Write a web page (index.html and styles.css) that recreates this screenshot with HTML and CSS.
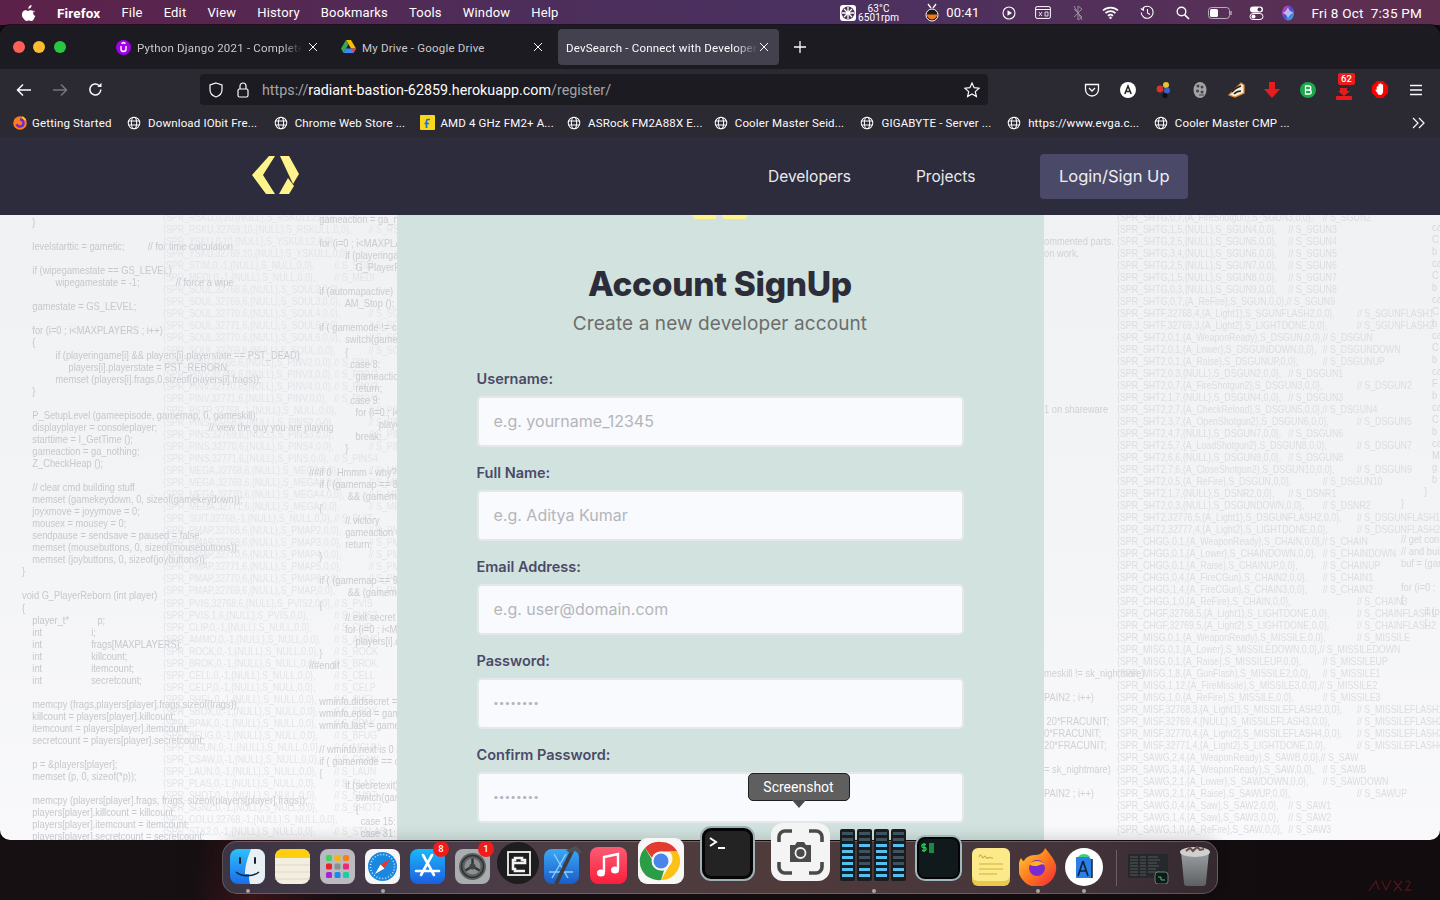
FILE: index.html
```html
<!DOCTYPE html>
<html lang="en">
<head>
    <meta charset="UTF-8">
    <meta name="viewport" content="width=device-width, initial-scale=1.0">
    <title>DevSearch - Connect with Developers</title>
    <link rel="stylesheet" href="styles.css">
</head>
<body>
    <svg class="sprites" aria-hidden="true">
        <symbol id="globe" viewBox="0 0 16 16">
            <g fill="none" stroke="#fbfbfe" stroke-width="1.2">
                <circle cx="8" cy="8" r="6.6"/>
                <ellipse cx="8" cy="8" rx="3" ry="6.6"/>
                <path d="M1.6 5.8h12.8M1.6 10.2h12.8"/>
            </g>
        </symbol>
        <symbol id="close" viewBox="0 0 10 10">
            <path d="M1 1l8 8M9 1l-8 8" stroke="#fbfbfe" stroke-width="1" fill="none"/>
        </symbol>
    </svg>

    <header class="menubar">
        <div class="menu-left">
            <svg class="apple" width="14" height="16" viewBox="0 0 14 16"><path fill="#fff" d="M9.6 0c.1 1.1-.3 2-.9 2.700-.6.7-1.500 1.200-2.400 1.100-.1-1 .4-2 .9-2.600C7.800.5 8.800.1 9.600 0zM12.800 5.400c-1 .6-1.600 1.500-1.600 2.700 0 1.400.8 2.400 2.100 3-.4 1.100-.9 2.100-1.600 3.100-.6.900-1.300 1.800-2.300 1.800s-1.300-.6-2.500-.6-1.600.6-2.500.6c-1 0-1.700-1-2.400-1.900C.4 12.600-.3 10.700 0 8.800c.2-1.900 1.700-3.500 3.400-3.500 1 0 1.900.7 2.600.7.700 0 1.700-.8 2.900-.7 1.600.1 3 .5 3.900 1.700z"/></svg>
            <strong class="menu-app">Firefox</strong>
            <span>File</span><span>Edit</span><span>View</span><span>History</span><span>Bookmarks</span><span>Tools</span><span>Window</span><span>Help</span>
        </div>
        <div class="menu-right">
            <div class="status-fan">
                <svg width="18" height="18" viewBox="0 0 18 18"><rect x="1" y="1" width="16" height="16" rx="3" fill="#fff"/><circle cx="9" cy="9" r="6.500" fill="#4b2f55"/><path d="M9 3v12M3 9h12M5 5l8 8M13 5l-8 8" stroke="#fff" stroke-width="1.300"/></svg>
                <div class="fan-text"><span>63°C</span><span>6501rpm</span></div>
            </div>
            <div class="status-timer">
                <svg width="14" height="20" viewBox="0 0 14 20"><path d="M3 1l3 4M11 1L8 5" stroke="#fff" stroke-width="1.300"/><circle cx="7" cy="12" r="6" fill="#1b1b1b" stroke="#fff"/><path d="M2 11.500h10a5 5 0 0 1-10 0z" fill="#f07a1a"/></svg>
                <span>00:41</span>
            </div>
            <svg class="st st-play" width="14" height="14" viewBox="0 0 14 14"><circle cx="7" cy="7" r="6" fill="none" stroke="#fff" stroke-width="1.100"/><path d="M5.500 4.300L10 7l-4.500 2.700z" fill="#fff"/></svg>
            <svg class="st st-box" width="16" height="13" viewBox="0 0 16 13"><rect x=".6" y=".6" width="14.800" height="11.800" rx="1.500" fill="none" stroke="#fff"/><path d="M1 3.500h14" stroke="#fff"/><path d="M4 6l3 4M7 6l-3 4M10 6h3v4h-3z" stroke="#fff" fill="none" stroke-width=".8"/></svg>
            <svg class="st st-bt" width="10" height="16" viewBox="0 0 10 16"><path d="M1 4l8 8-4 3V1l4 3-8 8" fill="none" stroke="#9a8aa0" stroke-width="1"/><path d="M1 1l8 14" stroke="#9a8aa0"/></svg>
            <svg class="st st-wifi" width="17" height="13" viewBox="0 0 17 13"><path d="M1 4.500a11 11 0 0 1 15 0M3.500 7.200a7.300 7.300 0 0 1 10 0M6 9.800a3.600 3.600 0 0 1 5 0" fill="none" stroke="#fff" stroke-width="1.700"/><circle cx="8.500" cy="11.700" r="1.200" fill="#fff"/></svg>
            <svg class="st st-hist" width="15" height="15" viewBox="0 0 15 15"><path d="M2.500 3.500a6 6 0 1 1-1.300 4" fill="none" stroke="#fff" stroke-width="1.100"/><path d="M0.800 3.500l2.500 1.800.4-3M7.500 4v4l2.500 1.500" fill="none" stroke="#fff" stroke-width="1.100"/></svg>
            <svg class="st st-search" width="14" height="14" viewBox="0 0 14 14"><circle cx="5.500" cy="5.500" r="4.300" fill="none" stroke="#fff" stroke-width="1.400"/><path d="M8.800 8.800L13 13" stroke="#fff" stroke-width="1.700"/></svg>
            <svg class="st st-batt" width="25" height="12" viewBox="0 0 25 12"><rect x=".5" y=".5" width="21" height="11" rx="3" fill="none" stroke="#b9abc0"/><rect x="2" y="2" width="8" height="8" rx="1.500" fill="#fff"/><path d="M23 4v4" stroke="#b9abc0" stroke-width="1.400"/></svg>
            <svg class="st st-ctl" width="15" height="14" viewBox="0 0 15 14"><rect x="1" y=".5" width="13" height="6" rx="3" fill="#fff"/><circle cx="10.500" cy="3.500" r="2" fill="#4f2f55"/><rect x="1" y="7.500" width="13" height="6" rx="3" fill="none" stroke="#fff"/><circle cx="4.500" cy="10.500" r="2" fill="#fff"/></svg>
            <svg class="st st-siri" width="14" height="16" viewBox="0 0 14 16"><defs><linearGradient id="siri" x1="0" y1="0" x2="1" y2="1"><stop offset="0" stop-color="#f040a8"/><stop offset=".5" stop-color="#4a48d8"/><stop offset="1" stop-color="#30d8e0"/></linearGradient></defs><ellipse cx="7" cy="8" rx="6" ry="7.500" fill="url(#siri)"/><path d="M1.500 8c3-1 4-3.500 5.500-5.500C8 5 9.500 7 12.500 8c-3 1-4.500 2.500-5.500 5.500C6 10.500 4.500 9 1.500 8z" fill="#fff" opacity=".6"/></svg>
            <span class="clock">Fri 8 Oct&nbsp; 7:35 PM</span>
        </div>
    </header>

    <div class="window">
        <div class="tabbar">
            <div class="lights"><i class="light red"></i><i class="light amber"></i><i class="light green"></i></div>
            <div class="tab tab-udemy">
                <svg width="15" height="15" viewBox="0 0 15 15"><circle cx="7.500" cy="7.500" r="7.500" fill="#a300ea"/><path d="M5 6v3a2.500 2.500 0 0 0 5 0V6M5.500 3.500L7.500 2.500l2 1" fill="none" stroke="#fff" stroke-width="1.400"/></svg>
                <span class="tab-title fade">Python Django 2021 - Complete</span>
                <svg class="tab-x" width="10" height="10"><use href="#close"/></svg>
            </div>
            <div class="tab tab-drive">
                <svg width="15" height="14" viewBox="0 0 15 14"><path d="M5 0h5l5 8.500h-5z" fill="#fbbc04"/><path d="M5 0L0 8.500 2.500 13 7.500 4.300z" fill="#34a853"/><path d="M2.500 13h10l2.500-4.500H5z" fill="#4285f4"/><path d="M10 8.500h5L12.500 13z" fill="#ea4335"/></svg>
                <span class="tab-title">My Drive - Google Drive</span>
                <svg class="tab-x" width="10" height="10"><use href="#close"/></svg>
            </div>
            <div class="tab tab-active">
                <span class="tab-title fade">DevSearch - Connect with Developers</span>
                <svg class="tab-x" width="10" height="10"><use href="#close"/></svg>
            </div>
            <svg class="tab-new" width="12" height="12" viewBox="0 0 12 12"><path d="M6 0v12M0 6h12" stroke="#fbfbfe" stroke-width="1.300"/></svg>
        </div>

        <div class="toolbar">
            <div class="nav-buttons">
                <svg width="16" height="14" viewBox="0 0 16 14"><path d="M15 7H1.500M7 1.500L1.500 7 7 12.500" fill="none" stroke="#fbfbfe" stroke-width="1.500"/></svg>
                <svg width="16" height="14" viewBox="0 0 16 14"><path d="M1 7h13.500M9 1.500L14.500 7 9 12.500" fill="none" stroke="#77767e" stroke-width="1.500"/></svg>
                <svg width="15" height="15" viewBox="0 0 15 15"><path d="M12.800 7.500a5.500 5.500 0 1 1-1.700-4" fill="none" stroke="#fbfbfe" stroke-width="1.500"/><path d="M13.500 0.800v4.200H9.300z" fill="#fbfbfe"/></svg>
            </div>
            <div class="urlbar">
                <svg width="14" height="16" viewBox="0 0 14 16"><path d="M7 1l6 2v5c0 3.500-2.500 5.800-6 7-3.500-1.200-6-3.500-6-7V3z" fill="none" stroke="#fbfbfe" stroke-width="1.200"/></svg>
                <svg width="12" height="16" viewBox="0 0 12 16"><rect x="1" y="7" width="10" height="8" rx="1.500" fill="none" stroke="#fbfbfe" stroke-width="1.200"/><path d="M3 7V4a3 3 0 0 1 6 0v3" fill="none" stroke="#fbfbfe" stroke-width="1.200"/></svg>
                <div class="url"><span class="dim">https://</span>radiant-bastion-62859.herokuapp.com<span class="dim">/register/</span></div>
                <svg class="star" width="16" height="16" viewBox="0 0 16 16"><path d="M8 1l2.100 4.700 5 .5-3.800 3.400 1.100 5L8 12l-4.400 2.600 1.100-5L.9 6.200l5-.5z" fill="none" stroke="#fbfbfe" stroke-width="1.200"/></svg>
            </div>
            <div class="addons">
                <span class="addon"><svg width="16" height="16" viewBox="0 0 16 16"><path d="M1.500 2.500h13v5a6.500 6.500 0 0 1-13 0z" fill="none" stroke="#fbfbfe" stroke-width="1.300"/><path d="M5 6l3 3 3-3" fill="none" stroke="#fbfbfe" stroke-width="1.300"/></svg></span>
                <span class="addon"><svg width="16" height="16" viewBox="0 0 16 16"><circle cx="8" cy="8" r="8" fill="#fff"/><path d="M4.800 12L8 4l3.200 8M6 9.500h4" fill="none" stroke="#222" stroke-width="1.500"/></svg></span>
                <span class="addon"><svg width="16" height="18" viewBox="0 0 16 18"><circle cx="10" cy="4" r="3" fill="#e8c23a"/><circle cx="4" cy="8" r="3.400" fill="#d8352a"/><circle cx="11" cy="9.500" r="3" fill="#3a62c8"/><circle cx="9" cy="14.500" r="2.600" fill="#111"/></svg></span>
                <span class="addon"><svg width="16" height="18" viewBox="0 0 16 18"><ellipse cx="8" cy="9" rx="6.500" ry="8" fill="#a4a4a4"/><circle cx="6" cy="5" r="1.500" fill="#444"/><circle cx="10" cy="6" r="1.500" fill="#444"/><circle cx="5.500" cy="10" r="1.500" fill="#444"/><circle cx="10" cy="11" r="1.500" fill="#444"/><path d="M7 14h5" stroke="#444" stroke-width="1.200"/></svg></span>
                <span class="addon"><svg width="17" height="16" viewBox="0 0 17 16"><path d="M1 13L13 1l3 2v8l-9 4z" fill="#f6eeda" stroke="#e08a30" stroke-width="1.300"/><path d="M4 10c2-3 6-5 9-6M6 12c2-2 4-3 7-3" stroke="#222" stroke-width="1.500" fill="none"/></svg></span>
                <span class="addon"><svg width="16" height="16" viewBox="0 0 16 16"><path d="M5 0h6v7h5l-8 9-8-9h5z" fill="#e81c1c"/></svg></span>
                <span class="addon"><svg width="16" height="16" viewBox="0 0 16 16"><circle cx="8" cy="8" r="8" fill="#1aa84a"/><path d="M5.500 4h3.300a2 2 0 0 1 0 4H5.500h3.700a2 2 0 0 1 0 4H5.500z" fill="none" stroke="#fff" stroke-width="1.300"/></svg></span>
                <span class="addon addon-badge"><svg width="16" height="12" viewBox="0 0 16 12"><path d="M4 0h7v3h3L8 8 2 3h2z" fill="#e81c1c"/><rect y="8" width="16" height="4" rx="1" fill="#e81c1c"/></svg><b class="badge">62</b></span>
                <span class="addon"><svg width="16" height="17" viewBox="0 0 16 17"><path d="M5 0h6l5 5v7l-5 5H5l-5-5V5z" fill="#f00"/><path d="M4.700 9V6a.8.8 0 0 1 1.600 0V3.500a.8.8 0 0 1 1.600 0V3a.8.8 0 0 1 1.600 0v1a.8.8 0 0 1 1.600 0v6c0 2-1 4-3 4-1.500 0-2.200-.8-2.800-2L3.600 9.500c-.4-.8.600-1.300 1.100-.5z" fill="#fff"/></svg></span>
                <span class="addon"><svg width="14" height="12" viewBox="0 0 14 12"><path d="M1 1.500h12M1 6h12M1 10.500h12" stroke="#fbfbfe" stroke-width="1.400"/></svg></span>
            </div>
        </div>

        <div class="bookmarks">
            <div class="bm bm-first">
                <svg width="14" height="14" viewBox="0 0 14 14"><circle cx="7" cy="7" r="6.800" fill="#ff7a1a"/><path d="M7 3.500a3.500 3.500 0 1 1-3.300 4.700" fill="none" stroke="#6b2bd0" stroke-width="2.400"/><path d="M9 0c2.500 1 4 3 4.500 5L10 3z" fill="#ffd23a"/></svg>
                <span>Getting Started</span>
            </div>
            <div class="bm"><svg width="14" height="14"><use href="#globe"/></svg><span>Download IObit Fre...</span></div>
            <div class="bm"><svg width="14" height="14"><use href="#globe"/></svg><span>Chrome Web Store ...</span></div>
            <div class="bm bm-tight">
                <svg width="15" height="15" viewBox="0 0 15 15"><rect width="15" height="15" rx="1" fill="#f8d71c"/><path d="M10 4.500H8a1.500 1.500 0 0 0-1.500 1.500v7M4.500 8.500h4.500" fill="none" stroke="#1d6fd8" stroke-width="1.700"/></svg>
                <span>AMD 4 GHz FM2+ A...</span>
            </div>
            <div class="bm"><svg width="14" height="14"><use href="#globe"/></svg><span>ASRock FM2A88X E...</span></div>
            <div class="bm"><svg width="14" height="14"><use href="#globe"/></svg><span>Cooler Master Seid...</span></div>
            <div class="bm"><svg width="14" height="14"><use href="#globe"/></svg><span>GIGABYTE - Server ...</span></div>
            <div class="bm"><svg width="14" height="14"><use href="#globe"/></svg><span>https://www.evga.c...</span></div>
            <div class="bm"><svg width="14" height="14"><use href="#globe"/></svg><span>Cooler Master CMP ...</span></div>
            <svg class="bm-more" width="14" height="12" viewBox="0 0 14 12"><path d="M1 1l5 5-5 5M7 1l5 5-5 5" fill="none" stroke="#fbfbfe" stroke-width="1.200"/></svg>
        </div>

        <div class="page">
            <!-- wallpaper of the site: doom source listing -->
            <div class="code-bg">
<pre class="code code-a">    }

    levelstarttic = gametic;         // for time calculation

    if (wipegamestate == GS_LEVEL)
             wipegamestate = -1;              // force a wipe

    gamestate = GS_LEVEL;

    for (i=0 ; i&lt;MAXPLAYERS ; i++)
    {
             if (playeringame[i] &amp;&amp; players[i].playerstate == PST_DEAD)
                  players[i].playerstate = PST_REBORN;
             memset (players[i].frags,0,sizeof(players[i].frags));
    }

    P_SetupLevel (gameepisode, gamemap, 0, gameskill);
    displayplayer = consoleplayer;                    // view the guy you are playing
    starttime = I_GetTime ();
    gameaction = ga_nothing;
    Z_CheckHeap ();

    // clear cmd building stuff
    memset (gamekeydown, 0, sizeof(gamekeydown));
    joyxmove = joyymove = 0;
    mousex = mousey = 0;
    sendpause = sendsave = paused = false;
    memset (mousebuttons, 0, sizeof(mousebuttons));
    memset (joybuttons, 0, sizeof(joybuttons));
}

void G_PlayerReborn (int player)
{
    player_t*           p;
    int                   i;
    int                   frags[MAXPLAYERS];
    int                   killcount;
    int                   itemcount;
    int                   secretcount;

    memcpy (frags,players[player].frags,sizeof(frags));
    killcount = players[player].killcount;
    itemcount = players[player].itemcount;
    secretcount = players[player].secretcount;

    p = &amp;players[player];
    memset (p, 0, sizeof(*p));

    memcpy (players[player].frags, frags, sizeof(players[player].frags));
    players[player].killcount = killcount;
    players[player].itemcount = itemcount;
    players[player].secretcount = secretcount;</pre>
<pre class="code code-b">{SPR_RSKU,0,10,{NULL},S_RSKULL2,0,0},
{SPR_RSKU,32769,10,{NULL},S_RSKULL,0,0},	// S_RSKULL2
{SPR_YSKU,0,10,{NULL},S_YSKULL2,0,0},
{SPR_YSKU,32769,10,{NULL},S_YSKULL,0,0},
{SPR_STIM,0,-1,{NULL},S_NULL,0,0},	// S_STIM
{SPR_MEDI,0,-1,{NULL},S_NULL,0,0},	// S_MEDI
{SPR_SOUL,32768,6,{NULL},S_SOUL2,0,0},
{SPR_SOUL,32769,6,{NULL},S_SOUL3,0,0},
{SPR_SOUL,32770,6,{NULL},S_SOUL4,0,0},	// S_SOUL3
{SPR_SOUL,32771,6,{NULL},S_SOUL5,0,0},	// S_SOUL4
{SPR_SOUL,32770,6,{NULL},S_SOUL6,0,0},	// S_SOUL5
{SPR_SOUL,32769,6,{NULL},S_SOUL,0,0},	// S_SOUL6
{SPR_PINV,32768,6,{NULL},S_PINV2,0,0},	// S_PINV
{SPR_PINV,32769,6,{NULL},S_PINV3,0,0},	// S_PINV2
{SPR_PINV,32770,6,{NULL},S_PINV4,0,0},	// S_PINV3
{SPR_PINV,32771,6,{NULL},S_PINV,0,0},	// S_PINV4
{SPR_PSTR,32768,-1,{NULL},S_NULL,0,0},	// S_PSTR
{SPR_PINS,32768,6,{NULL},S_PINS2,0,0},	// S_PINS
{SPR_PINS,32769,6,{NULL},S_PINS3,0,0},	// S_PINS2
{SPR_PINS,32770,6,{NULL},S_PINS4,0,0},	// S_PINS3
{SPR_PINS,32771,6,{NULL},S_PINS,0,0},	// S_PINS4
{SPR_MEGA,32768,6,{NULL},S_MEG2,0,0},	// S_MEGA
{SPR_MEGA,32769,6,{NULL},S_MEGA3,0,0},	// S_MEGA2
{SPR_MEGA,32770,6,{NULL},S_MEGA4,0,0},	// S_MEGA3
{SPR_MEGA,32771,6,{NULL},S_MEGA,0,0},	// S_MEGA4
{SPR_SUIT,32768,-1,{NULL},S_NULL,0,0},	// S_SUIT
{SPR_PMAP,32768,6,{NULL},S_PMAP2,0,0},	// S_PMAP
{SPR_PMAP,32769,6,{NULL},S_PMAP3,0,0},	// S_PMAP2
{SPR_PMAP,32770,6,{NULL},S_PMAP4,0,0},	// S_PMAP3
{SPR_PMAP,32771,6,{NULL},S_PMAP5,0,0},	// S_PMAP4
{SPR_PMAP,32770,6,{NULL},S_PMAP6,0,0},	// S_PMAP5
{SPR_PMAP,32769,6,{NULL},S_PMAP,0,0},	// S_PMAP6
{SPR_PVIS,32768,6,{NULL},S_PVIS2,0,0},	// S_PVIS
{SPR_PVIS,1,6,{NULL},S_PVIS,0,0},	// S_PVIS2
{SPR_CLIP,0,-1,{NULL},S_NULL,0,0},	// S_CLIP
{SPR_AMMO,0,-1,{NULL},S_NULL,0,0},	// S_AMMO
{SPR_ROCK,0,-1,{NULL},S_NULL,0,0},	// S_ROCK
{SPR_BROK,0,-1,{NULL},S_NULL,0,0},	// S_BROK
{SPR_CELL,0,-1,{NULL},S_NULL,0,0},	// S_CELL
{SPR_CELP,0,-1,{NULL},S_NULL,0,0},	// S_CELP
{SPR_SHEL,0,-1,{NULL},S_NULL,0,0},	// S_SHEL
{SPR_SBOX,0,-1,{NULL},S_NULL,0,0},	// S_SBOX
{SPR_BPAK,0,-1,{NULL},S_NULL,0,0},	// S_BPAK
{SPR_BFUG,0,-1,{NULL},S_NULL,0,0},	// S_BFUG
{SPR_MGUN,0,-1,{NULL},S_NULL,0,0},	// S_MGUN
{SPR_CSAW,0,-1,{NULL},S_NULL,0,0},	// S_CSAW
{SPR_LAUN,0,-1,{NULL},S_NULL,0,0},	// S_LAUN
{SPR_PLAS,0,-1,{NULL},S_NULL,0,0},	// S_PLAS
{SPR_SHOT,0,-1,{NULL},S_NULL,0,0},	// S_SHOT
{SPR_SGN2,0,-1,{NULL},S_NULL,0,0},	// S_SHOT2
{SPR_COLU,32768,-1,{NULL},S_NULL,0,0},
{SPR_STK2,0,-1,{NULL},S_NULL,0,0},	// S_STALAG</pre>
<pre class="code code-c">    gameaction = ga_nothing;

    for (i=0 ; i&lt;MAXPLAYERS ; i++)
              if (playeringame[i])
                  G_PlayerFinishLevel (i);

    if (automapactive)
              AM_Stop ();

    if ( gamemode != commercial)
              switch(gamemap)
              {
                case 8:
                  gameaction = ga_victory;
                  return;
                case 9:
                  for (i=0 ; i&lt;MAXPLAYERS ; i++)
                           players[i].didsecret = true;
                  break;
              }

//#if 0  Hmmm - why?
    if ( (gamemap == 8)
               &amp;&amp; (gamemode != commercial) )
    {
              // victory
              gameaction = ga_victory;
              return;
    }

    if ( (gamemap == 9)
               &amp;&amp; (gamemode != commercial) )
    {
              // exit secret level
              for (i=0 ; i&lt;MAXPLAYERS ; i++)
                  players[i].didsecret = true;
    }
//#endif


    wminfo.didsecret = players[consoleplayer].didsecret;
    wminfo.epsd = gameepisode -1;
    wminfo.last = gamemap -1;

    // wminfo.next is 0 biased
    if ( gamemode == commercial)
    {
              if (secretexit)
                  switch(gamemap)
                  {
                    case 15: wminfo.next = 30; break;
                    case 31: wminfo.next = 31; break;</pre>
<pre class="code code-e">ommented parts.
on work.












1 on shareware





















meskill != sk_nightmare)

PAIN2 ; i++)

 20*FRACUNIT;
0*FRACUNIT;
20*FRACUNIT;

= sk_nightmare)

PAIN2 ; i++)</pre>
<pre class="code code-d">{SPR_SHTG,0,7,{A_FireShotgun},S_SGUN3,0,0},	// S_SGUN2
{SPR_SHTG,1,5,{NULL},S_SGUN4,0,0},	// S_SGUN3
{SPR_SHTG,2,5,{NULL},S_SGUN5,0,0},	// S_SGUN4
{SPR_SHTG,3,4,{NULL},S_SGUN6,0,0},	// S_SGUN5
{SPR_SHTG,2,5,{NULL},S_SGUN7,0,0},	// S_SGUN6
{SPR_SHTG,1,5,{NULL},S_SGUN8,0,0},	// S_SGUN7
{SPR_SHTG,0,3,{NULL},S_SGUN9,0,0},	// S_SGUN8
{SPR_SHTG,0,7,{A_ReFire},S_SGUN,0,0},// S_SGUN9
{SPR_SHTF,32768,4,{A_Light1},S_SGUNFLASH2,0,0},	// S_SGUNFLASH1
{SPR_SHTF,32769,3,{A_Light2},S_LIGHTDONE,0,0},	// S_SGUNFLASH2
{SPR_SHT2,0,1,{A_WeaponReady},S_DSGUN,0,0},// S_DSGUN
{SPR_SHT2,0,1,{A_Lower},S_DSGUNDOWN,0,0},	// S_DSGUNDOWN
{SPR_SHT2,0,1,{A_Raise},S_DSGUNUP,0,0},	// S_DSGUNUP
{SPR_SHT2,0,3,{NULL},S_DSGUN2,0,0},	// S_DSGUN1
{SPR_SHT2,0,7,{A_FireShotgun2},S_DSGUN3,0,0},	// S_DSGUN2
{SPR_SHT2,1,7,{NULL},S_DSGUN4,0,0},	// S_DSGUN3
{SPR_SHT2,2,7,{A_CheckReload},S_DSGUN5,0,0},// S_DSGUN4
{SPR_SHT2,3,7,{A_OpenShotgun2},S_DSGUN6,0,0},	// S_DSGUN5
{SPR_SHT2,4,7,{NULL},S_DSGUN7,0,0},	// S_DSGUN6
{SPR_SHT2,5,7,{A_LoadShotgun2},S_DSGUN8,0,0},	// S_DSGUN7
{SPR_SHT2,6,6,{NULL},S_DSGUN9,0,0},	// S_DSGUN8
{SPR_SHT2,7,6,{A_CloseShotgun2},S_DSGUN10,0,0},	// S_DSGUN9
{SPR_SHT2,0,5,{A_ReFire},S_DSGUN,0,0},	// S_DSGUN10
{SPR_SHT2,1,7,{NULL},S_DSNR2,0,0},	// S_DSNR1
{SPR_SHT2,0,3,{NULL},S_DSGUNDOWN,0,0},	// S_DSNR2
{SPR_SHT2,32776,5,{A_Light1},S_DSGUNFLASH2,0,0},	// S_DSGUNFLASH1
{SPR_SHT2,32777,4,{A_Light2},S_LIGHTDONE,0,0},	// S_DSGUNFLASH2
{SPR_CHGG,0,1,{A_WeaponReady},S_CHAIN,0,0},// S_CHAIN
{SPR_CHGG,0,1,{A_Lower},S_CHAINDOWN,0,0},	// S_CHAINDOWN
{SPR_CHGG,0,1,{A_Raise},S_CHAINUP,0,0},	// S_CHAINUP
{SPR_CHGG,0,4,{A_FireCGun},S_CHAIN2,0,0},	// S_CHAIN1
{SPR_CHGG,1,4,{A_FireCGun},S_CHAIN3,0,0},	// S_CHAIN2
{SPR_CHGG,1,0,{A_ReFire},S_CHAIN,0,0},		// S_CHAIN3
{SPR_CHGF,32768,5,{A_Light1},S_LIGHTDONE,0,0},	// S_CHAINFLASH1
{SPR_CHGF,32769,5,{A_Light2},S_LIGHTDONE,0,0},	// S_CHAINFLASH2
{SPR_MISG,0,1,{A_WeaponReady},S_MISSILE,0,0},	// S_MISSILE
{SPR_MISG,0,1,{A_Lower},S_MISSILEDOWN,0,0},// S_MISSILEDOWN
{SPR_MISG,0,1,{A_Raise},S_MISSILEUP,0,0},	// S_MISSILEUP
{SPR_MISG,1,8,{A_GunFlash},S_MISSILE2,0,0},	// S_MISSILE1
{SPR_MISG,1,12,{A_FireMissile},S_MISSILE3,0,0},// S_MISSILE2
{SPR_MISG,1,0,{A_ReFire},S_MISSILE,0,0},	// S_MISSILE3
{SPR_MISF,32768,3,{A_Light1},S_MISSILEFLASH2,0,0},	// S_MISSILEFLASH1
{SPR_MISF,32769,4,{NULL},S_MISSILEFLASH3,0,0},	// S_MISSILEFLASH2
{SPR_MISF,32770,4,{A_Light2},S_MISSILEFLASH4,0,0},	// S_MISSILEFLASH3
{SPR_MISF,32771,4,{A_Light2},S_LIGHTDONE,0,0},	// S_MISSILEFLASH4
{SPR_SAWG,2,4,{A_WeaponReady},S_SAWB,0,0},// S_SAW
{SPR_SAWG,3,4,{A_WeaponReady},S_SAW,0,0},	// S_SAWB
{SPR_SAWG,2,1,{A_Lower},S_SAWDOWN,0,0},	// S_SAWDOWN
{SPR_SAWG,2,1,{A_Raise},S_SAWUP,0,0},		// S_SAWUP
{SPR_SAWG,0,4,{A_Saw},S_SAW2,0,0},	// S_SAW1
{SPR_SAWG,1,4,{A_Saw},S_SAW3,0,0},	// S_SAW2
{SPR_SAWG,1,0,{A_ReFire},S_SAW,0,0},	// S_SAW3</pre>
<pre class="code code-f">            ca
            C
            b
            ca
            C
            b
            ca
            C
            b
            ca
            C
            b
            ca
            F
            b
            ca
            C
            b
            ca
            M
            g
            b
         }
}


// get con
// and buil
buf = (gam

for (i=0 ;
{
         if (p
         {</pre>
            </div>

            <nav class="site-nav">
                <svg class="site-logo" width="47" height="38" viewBox="0 0 47 38"><g fill="#fff38c"><path d="M17 0h6L11 19l12 19h-9L0 19z"/><path d="M28 0h9l10 18-6 10z"/><path d="M27 38l9-16 6 8-5 8z"/></g></svg>
                <div class="nav-links">
                    <a class="nav-link">Developers</a>
                    <a class="nav-link">Projects</a>
                    <a class="nav-btn">Login/Sign Up</a>
                </div>
            </nav>

            <main class="auth">
                <svg class="auth-logo" width="56" height="4" viewBox="0 0 56 4"><path d="M0 0h25l-2 4H3zM30 0h26l-3 4H32z" fill="#fff38c"/></svg>
                <div class="auth-head">
                    <h1>Account SignUp</h1>
                    <p>Create a new developer account</p>
                </div>
                <form class="form">
                    <div class="field">
                        <label>Username:</label>
                        <input type="text" placeholder="e.g. yourname_12345">
                    </div>
                    <div class="field">
                        <label>Full Name:</label>
                        <input type="text" placeholder="e.g. Aditya Kumar">
                    </div>
                    <div class="field">
                        <label>Email Address:</label>
                        <input type="text" placeholder="e.g. user@domain.com">
                    </div>
                    <div class="field">
                        <label>Password:</label>
                        <input class="secret" type="password" placeholder="••••••••">
                    </div>
                    <div class="field">
                        <label>Confirm Password:</label>
                        <input class="secret" type="password" placeholder="••••••••">
                    </div>
                </form>
            </main>
        </div>
    </div>

    <footer class="wallpaper">
        <svg class="scribble" width="44" height="16" viewBox="0 0 44 16"><path d="M1 13L8 3l3 9M14 3l4 9 5-10M26 3l8 10M34 3l-8 10M38 4c3-2 5 0 3 3l-3 5h5" fill="none" stroke="#4f1518" stroke-width="1.300"/></svg>
    </footer>

    <div class="dock">
        <div class="dock-item dotted">
            <svg width="35" height="35" viewBox="0 0 35 35"><defs><linearGradient id="fnd" x1="0" y1="0" x2="0" y2="1"><stop offset="0" stop-color="#2ec0fb"/><stop offset="1" stop-color="#1a6de8"/></linearGradient></defs><rect width="35" height="35" rx="8" fill="url(#fnd)"/><path d="M27 0a8 8 0 0 1 8 8v19a8 8 0 0 1-8 8H20c-1-4-1-7-1-10h-4c0-9 3-17 6-25z" fill="#e8eff5"/><path d="M10 9v5M25 9v5" stroke="#123" stroke-width="2" stroke-linecap="round"/><path d="M6 23c6 5 17 5 23 0" fill="none" stroke="#123" stroke-width="1.500"/></svg>
        </div>
        <div class="dock-item">
            <svg width="35" height="35" viewBox="0 0 35 35"><rect width="35" height="35" rx="8" fill="#f3eee0"/><path d="M0 9V8a8 8 0 0 1 8-8h19a8 8 0 0 1 8 8v1z" fill="#fdcf0e"/><path d="M0 16h35M0 23h35M0 30h35" stroke="#d8d2c2" stroke-width=".8"/></svg>
        </div>
        <div class="dock-item">
            <svg width="35" height="35" viewBox="0 0 35 35"><rect width="35" height="35" rx="8" fill="#bdb9c0"/><g><rect x="6" y="6" width="6" height="6" rx="1.500" fill="#3dd65c"/><rect x="14.500" y="6" width="6" height="6" rx="1.500" fill="#f6b40e"/><rect x="23" y="6" width="6" height="6" rx="1.500" fill="#f5801e"/><rect x="6" y="14.500" width="6" height="6" rx="1.500" fill="#e5252a"/><rect x="14.500" y="14.500" width="6" height="6" rx="1.500" fill="#8a8f94"/><rect x="23" y="14.500" width="6" height="6" rx="1.500" fill="#ef2a6e"/><rect x="6" y="23" width="6" height="6" rx="1.500" fill="#a522d8"/><rect x="14.500" y="23" width="6" height="6" rx="1.500" fill="#1a8cf0"/><rect x="23" y="23" width="6" height="6" rx="1.500" fill="#12d0a8"/></g></svg>
        </div>
        <div class="dock-item dotted">
            <svg width="35" height="35" viewBox="0 0 35 35"><rect width="35" height="35" rx="8" fill="#f6f6f6"/><circle cx="17.500" cy="17.500" r="14.500" fill="#1a88e0"/><circle cx="17.500" cy="17.500" r="12" fill="none" stroke="#cfe6fa" stroke-width="1.600" stroke-dasharray="1 2"/><path d="M25 10L15.500 15.500 19.500 19.500z" fill="#f0342c"/><path d="M10 25l5.500-9.500 4 4z" fill="#fff"/></svg>
        </div>
        <div class="dock-item">
            <svg width="35" height="35" viewBox="0 0 35 35"><defs><linearGradient id="aps" x1="0" y1="0" x2="0" y2="1"><stop offset="0" stop-color="#1ab8fb"/><stop offset="1" stop-color="#1c5ee0"/></linearGradient></defs><rect width="35" height="35" rx="8" fill="url(#aps)"/><path d="M13 6l11 20M22 6L11 26M6 22h23" stroke="#fff" stroke-width="2.600" stroke-linecap="round"/></svg>
            <b class="dock-badge">8</b>
        </div>
        <div class="dock-item">
            <svg width="35" height="35" viewBox="0 0 35 35"><rect width="35" height="35" rx="8" fill="#a9adb0"/><circle cx="17.500" cy="17.500" r="13.500" fill="#5d6062"/><circle cx="17.500" cy="17.500" r="11" fill="none" stroke="#2f3133" stroke-width="1.500"/><circle cx="17.500" cy="17.500" r="8" fill="#8d9092"/><path d="M17.500 9.500v6M10.500 21.500l5-3M24.500 21.500l-5-3" stroke="#333" stroke-width="2.400"/><circle cx="17.500" cy="17.500" r="3" fill="#444"/></svg>
            <b class="dock-badge">1</b>
        </div>
        <div class="dock-item">
            <svg width="42" height="42" viewBox="0 0 42 42"><circle cx="21" cy="21" r="21" fill="#1d1d1d"/><rect x="11" y="10" width="22" height="23" fill="none" stroke="#f2f2f2" stroke-width="1.800"/><path d="M16 21h12v-3h-3v-2h-7v2h-2v9h2v2h10" fill="none" stroke="#f2f2f2" stroke-width="2.600"/></svg>
        </div>
        <div class="dock-item">
            <svg width="40" height="38" viewBox="0 0 40 38"><defs><linearGradient id="xcd" x1="0" y1="0" x2="0" y2="1"><stop offset="0" stop-color="#3aa8f5"/><stop offset="1" stop-color="#1a5cc8"/></linearGradient></defs><rect y="3" width="35" height="35" rx="8" fill="url(#xcd)"/><path d="M10 8l14 24M22 8L8 32M5 26h24" stroke="#8fd0fa" stroke-width="1.400" fill="none"/><path d="M29 3l-17 35" stroke="#3d3d42" stroke-width="4"/><path d="M22 4l10-4 6 6-3 2-4-3-5 2z" fill="#4f4f55"/></svg>
        </div>
        <div class="dock-item">
            <svg width="37" height="37" viewBox="0 0 37 37"><defs><linearGradient id="msc" x1="0" y1="0" x2="0" y2="1"><stop offset="0" stop-color="#fb5c74"/><stop offset="1" stop-color="#fa1e3c"/></linearGradient></defs><rect width="37" height="37" rx="8" fill="url(#msc)"/><path d="M14 25V10l14-3v15" fill="none" stroke="#fff" stroke-width="2.400"/><ellipse cx="11" cy="26" rx="4" ry="3.500" fill="#fff"/><ellipse cx="25" cy="23" rx="4" ry="3.500" fill="#fff"/></svg>
        </div>
        <div class="dock-item">
            <svg width="46" height="46" viewBox="0 0 46 46"><rect width="46" height="46" rx="9" fill="#f7f7f7"/><path d="M23 4a19 19 0 0 1 16.500 9.500H23a9.500 9.500 0 0 0-9 6.500L7 10A19 19 0 0 1 23 4z" fill="#e33b2e"/><path d="M39.500 13.500A19 19 0 0 1 23 42l8.200-14.200a9.500 9.500 0 0 0 0-14.300z" fill="#fbc116"/><path d="M23 42A19 19 0 0 1 7 10l8.500 14a9.500 9.500 0 0 0 10.500 8.500z" fill="#2a9d46"/><circle cx="23" cy="23" r="9.500" fill="#f7f7f7"/><circle cx="23" cy="23" r="7.500" fill="#4a85ea"/></svg>
        </div>
        <div class="dock-item raised">
            <svg width="55" height="55" viewBox="0 0 55 55"><rect x="1" y="1" width="53" height="53" rx="10" fill="#050505" stroke="#9fb0b4" stroke-width="2"/><rect x="5" y="5" width="45" height="45" rx="6" fill="#232323"/><path d="M10 12l6 4-6 4" fill="none" stroke="#fff" stroke-width="2"/><path d="M18 22h7" stroke="#fff" stroke-width="2"/></svg>
        </div>
        <div class="dock-item raised">
            <svg width="59" height="58" viewBox="0 0 59 58"><rect width="59" height="58" rx="12" fill="#f4f4f4"/><path d="M8 19v-5a6 6 0 0 1 6-6h7M38 8h7a6 6 0 0 1 6 6v5M51 39v5a6 6 0 0 1-6 6h-7M21 50h-7a6 6 0 0 1-6-6v-5" fill="none" stroke="#4a4a4a" stroke-width="3.600"/><path d="M19 22h5l2-3h7l2 3h5v17H19z" fill="#4a4a4a"/><circle cx="29.500" cy="30" r="5" fill="none" stroke="#f4f4f4" stroke-width="1.800"/></svg>
            <div class="dock-tip">Screenshot</div>
        </div>
        <div class="dock-item raised dotted">
            <svg width="67" height="52" viewBox="0 0 67 52"><rect x="0" width="15" height="52" rx="2" fill="#1a1d20"/><rect x="17" width="15" height="52" rx="2" fill="#1a1d20"/><rect x="34" width="15" height="52" rx="2" fill="#1a1d20"/><rect x="51" width="15" height="52" rx="2" fill="#1a1d20"/><g fill="#3e5260"><rect x="2" y="3" width="11" height="3"/><rect x="19" y="3" width="11" height="3"/><rect x="36" y="3" width="11" height="3"/><rect x="53" y="3" width="11" height="3"/><rect x="2" y="9" width="11" height="3"/><rect x="19" y="9" width="11" height="3"/><rect x="36" y="9" width="11" height="3"/><rect x="53" y="9" width="11" height="3"/><rect x="19" y="21" width="11" height="3"/><rect x="19" y="27" width="11" height="3"/><rect x="19" y="33" width="11" height="3"/><rect x="53" y="21" width="11" height="3"/><rect x="53" y="27" width="11" height="3"/><rect x="53" y="33" width="11" height="3"/></g><g fill="#55c0f0"><rect x="2" y="15" width="11" height="3"/><rect x="2" y="21" width="11" height="3"/><rect x="2" y="27" width="11" height="3"/><rect x="2" y="33" width="11" height="3"/><rect x="2" y="39" width="11" height="3"/><rect x="2" y="45" width="11" height="3"/><rect x="19" y="15" width="11" height="3"/><rect x="19" y="39" width="11" height="3"/><rect x="19" y="45" width="11" height="3"/><rect x="36" y="15" width="11" height="3"/><rect x="36" y="21" width="11" height="3"/><rect x="36" y="27" width="11" height="3"/><rect x="36" y="33" width="11" height="3"/><rect x="36" y="39" width="11" height="3"/><rect x="36" y="45" width="11" height="3"/><rect x="53" y="15" width="11" height="3"/><rect x="53" y="39" width="11" height="3"/><rect x="53" y="45" width="11" height="3"/></g></svg>
        </div>
        <div class="dock-item raised">
            <svg width="47" height="46" viewBox="0 0 47 46"><rect x="1" y="1" width="45" height="44" rx="9" fill="#050505" stroke="#9fb8bc" stroke-width="2"/><rect x="4" y="4" width="39" height="38" rx="6" fill="#10191b"/><path d="M11 9.500H8c-1.500 0-1.500 3 0 3h2c1.500 0 1.500 3 0 3H7M9 8v9" fill="none" stroke="#28d050" stroke-width="1.300"/><rect x="14" y="8" width="5" height="10" fill="#1a8a40"/></svg>
        </div>
        <div class="dock-item low">
            <svg width="39" height="38" viewBox="0 0 39 38"><rect y="3" width="38" height="35" rx="6" fill="#e8c94e"/><rect width="38" height="33" rx="6" fill="#fbe98a"/><path d="M7 9c2-6 3 3 5 0s2 3 4 1 3 1 5 0M7 16h24M7 21h24M7 26h18" fill="none" stroke="#d0b040" stroke-width="1.100"/></svg>
        </div>
        <div class="dock-item low dotted">
            <svg width="38" height="38" viewBox="0 0 38 38"><defs><linearGradient id="ffx" x1="0" y1="0" x2="1" y2="1"><stop offset="0" stop-color="#ffd33d"/><stop offset=".5" stop-color="#ff7a1e"/><stop offset="1" stop-color="#f0243c"/></linearGradient></defs><path d="M26 0c3 4 9 10 11 17a19 19 0 1 1-35-7c1 2 2 3 3 3 2-5 8-6 12-6 4 0 8-3 9-7z" fill="url(#ffx)"/><circle cx="18" cy="20" r="8" fill="#7a2bd0"/><path d="M10 16c4-4 13-4 16 1-4-2-5 0-8 1-3 0-6 0-8-2z" fill="#ffb020"/></svg>
        </div>
        <div class="dock-item low dotted">
            <svg width="38" height="38" viewBox="0 0 38 38"><circle cx="19" cy="19" r="19" fill="#fff"/><path d="M11 9h13l3 3v18H11z" fill="#2a7fe8"/><path d="M13 9a7 6 0 0 1 12 0z" fill="#3fd07a"/><path d="M18 13l-5 15M18 13l5 15M15 23h6" stroke="#10253c" stroke-width="1.700" fill="none"/><path d="M27 11v19" stroke="#10253c" stroke-width="1.500"/></svg>
        </div>
        <div class="dock-sep-cell"><i class="dock-sep"></i></div>
        <div class="dock-item">
            <svg width="44" height="31" viewBox="0 0 44 31"><rect y="1" width="40" height="24" fill="#26292b"/><g stroke="#6b7073" stroke-width=".7"><path d="M2 4h8M12 4h6M20 4h10M2 7h8M12 7h6M20 7h12M2 10h8M12 10h6M20 10h9M2 13h8M12 13h6M20 13h11M2 16h8M12 16h6M20 16h8M2 19h8M12 19h6M20 19h12M2 22h8M12 22h6"/></g><rect x="27" y="19" width="13" height="12" rx="3" fill="#0f1a18" stroke="#6a7a78"/><path d="M30 24h3v3h4" stroke="#3ec070" fill="none"/></svg>
        </div>
        <div class="dock-item low">
            <svg width="32" height="40" viewBox="0 0 32 40"><defs><linearGradient id="trs" x1="0" y1="0" x2="0" y2="1"><stop offset="0" stop-color="#9ba0a2"/><stop offset="1" stop-color="#5c6062"/></linearGradient></defs><path d="M2 6h28l-3 31a3 3 0 0 1-3 3H8a3 3 0 0 1-3-3z" fill="url(#trs)"/><ellipse cx="16" cy="6" rx="15" ry="5" fill="#cfd0d0"/><path d="M7 5l4-3 3 3 4-4 3 3 4-1" stroke="#6b4a4a" stroke-width="2" fill="none"/></svg>
        </div>
    </div>
</body>
</html>
```

FILE: styles.css
```css
* {
    margin: 0;
    padding: 0;
    box-sizing: border-box;
}

html, body {
    height: 100%;
}

body {
    position: relative;
    display: flex;
    flex-direction: column;
    height: 900px;
    overflow: hidden;
    background: #120d10;
    font-family: 'Roboto', 'Liberation Sans', sans-serif;
}

svg {
    display: block;
    flex-shrink: 0;
}

.sprites {
    display: none;
}

/* ---- mac menu bar ---- */

.menubar {
    display: flex;
    justify-content: space-between;
    align-items: center;
    height: 25px;
    padding-left: 22px;
    background: linear-gradient(90deg, #5d2148 0%, #4e2d5a 35%, #4a3160 55%, #543059 80%, #5e2e4e 100%);
    color: #fff;
    font-size: 13px;
    letter-spacing: 0.16px;
}

.menu-left {
    display: flex;
    align-items: center;
}

.menu-left span {
    margin-left: 21.100px;
}

.apple {
    margin-right: 21px;
}

.menu-app {
    font-weight: 700;
    font-size: 13.500px;
}

.menu-right {
    display: flex;
    align-items: center;
}

.status-fan {
    display: flex;
    align-items: center;
    gap: 1px;
}

.fan-text {
    display: flex;
    flex-direction: column;
    align-items: center;
    font-size: 10px;
    line-height: 9px;
}

.status-timer {
    display: flex;
    align-items: center;
    gap: 7px;
    margin-left: 26px;
}

.st-play { margin-left: 23px; }
.st-box { margin-left: 19px; }
.st-bt { margin-left: 22px; }
.st-wifi { margin-left: 19px; }
.st-hist { margin-left: 21px; }
.st-search { margin-left: 21px; }
.st-batt { margin-left: 18px; }
.st-ctl { margin-left: 16px; }
.st-siri { margin-left: 17px; }

.clock {
    margin: 0 18px 0 16px;
    font-size: 13.500px;
    letter-spacing: 0.22px;
}

/* ---- browser window ---- */

.window {
    display: flex;
    flex-direction: column;
    height: 815px;
    border-radius: 10px;
    overflow: hidden;
    background: #1c1b22;
    box-shadow: 0 0 0 1px rgba(0, 0, 0, 0.6);
}

.tabbar {
    display: flex;
    align-items: center;
    height: 44px;
    background: #1c1b22;
    color: #fbfbfe;
    font-size: 11.500px;
}

.lights {
    display: flex;
    gap: 8.500px;
    width: 116px;
    padding-left: 12.500px;
}

.light {
    width: 12px;
    height: 12px;
    border-radius: 50%;
}

.red { background: #ff5f57; }
.amber { background: #febc2e; }
.green { background: #28c840; }

.tab {
    display: flex;
    align-items: center;
    position: relative;
    height: 36px;
}

.tab-udemy {
    width: 225px;
    gap: 6px;
    color: #c9c9ce;
}

.tab-drive {
    width: 217px;
    gap: 6px;
    color: #c9c9ce;
}

.tab-active {
    width: 221px;
    padding-left: 8px;
    background: #42414d;
    border-radius: 4px;
}

.tab-title {
    padding-top: 1px;
    white-space: nowrap;
    overflow: hidden;
    letter-spacing: 0.2px;
}

.tab-udemy .tab-title {
    width: 165px;
}

.tab-drive .tab-title {
    width: 165px;
}

.tab-active .tab-title {
    width: 192px;
}

.fade {
    -webkit-mask-image: linear-gradient(90deg, #000 88%, transparent 100%);
    mask-image: linear-gradient(90deg, #000 88%, transparent 100%);
}

.tab-active .tab-x {
    margin-left: 1px;
}

.tab-new {
    margin-left: 15px;
}

.toolbar {
    display: flex;
    align-items: center;
    height: 41px;
    background: #2b2a33;
}

.nav-buttons {
    display: flex;
    align-items: center;
    gap: 20px;
    width: 200px;
    padding-left: 16px;
}

.urlbar {
    display: flex;
    align-items: center;
    width: 788px;
    height: 31px;
    padding: 0 8px 0 9px;
    background: #1c1b22;
    border-radius: 4px;
}

.urlbar svg:nth-child(2) {
    margin-left: 14px;
}

.url {
    flex: 1;
    margin-left: 13px;
    color: #fbfbfe;
    font-size: 14.300px;
}

.url .dim {
    color: #a5a4aa;
}

.addons {
    display: flex;
    margin-left: 86px;
}

.addon {
    display: flex;
    justify-content: center;
    align-items: center;
    position: relative;
    width: 36px;
    height: 22px;
}

.badge {
    position: absolute;
    top: -6px;
    left: 12px;
    padding: 0 3px;
    background: #e81c1c;
    border-radius: 2px;
    color: #fff;
    font-size: 9.500px;
    line-height: 12px;
    font-weight: 500;
}

.addon-badge svg {
    margin-top: 8px;
}

.bookmarks {
    display: flex;
    align-items: center;
    height: 27px;
    padding: 0 14px 2px 13px;
    background: #2b2a33;
    color: #fbfbfe;
    font-size: 11.500px;
    letter-spacing: 0.15px;
}

.bm {
    display: flex;
    align-items: center;
    gap: 7px;
    width: 146.700px;
    white-space: nowrap;
}

.bm-first {
    gap: 5px;
    width: 114px;
}

.bm-tight {
    gap: 5px;
}

.bm-more {
    margin-left: auto;
}

/* ---- the site ---- */

.page {
    position: relative;
    flex: 1;
    display: flex;
    flex-direction: column;
    overflow: hidden;
    background: linear-gradient(180deg, #f0f1f3 0%, #f3f4f6 55%, #f9f9fb 100%);
}

.code-bg {
    position: absolute;
    inset: 0;
    overflow: hidden;
}

/* the listing in the picture is squeezed sideways */
.code {
    position: absolute;
    font-family: 'Liberation Sans', Arial, sans-serif;
    font-size: 10.500px;
    line-height: 12.050px;
    white-space: pre;
    filter: blur(0.3px);
    transform: scaleX(0.885);
    transform-origin: left top;
}

.code-a {
    left: 22px;
    top: 79px;
    color: #c6c8cc;
}

.code-b {
    left: 163px;
    top: 74px;
    color: #e3e4e8;
    transform: scaleX(0.84);
    tab-size: 40.800px;
}

.code-c {
    left: 309px;
    top: 76px;
    color: #cacccf;
}

.code-d {
    left: 1117px;
    top: 74px;
    line-height: 12px;
    color: #dcdde0;
    transform: scaleX(0.84);
    tab-size: 40.800px;
}

.code-e {
    left: 1044px;
    top: 98px;
    line-height: 12px;
    color: #d0d1d4;
}

.code-f {
    left: 1401px;
    top: 84px;
    line-height: 12px;
    color: #d6d7da;
}

.site-nav {
    position: relative;
    z-index: 2;
    display: flex;
    justify-content: space-between;
    align-items: center;
    height: 78px;
    padding: 0 252px;
    background: #2d2c3c;
}

.site-logo {
    margin-bottom: 2px;
}

.nav-links {
    display: flex;
    align-items: center;
    gap: 65px;
    color: #eaeaea;
    font-family: 'Inter', 'Liberation Sans', sans-serif;
    font-size: 15.500px;
}

.nav-btn {
    padding: 13px 18.500px;
    background: #4a4a68;
    border-radius: 4px;
    color: #eeeef4;
    font-size: 16.500px;
    line-height: 19px;
}

.auth {
    position: relative;
    display: flex;
    flex-direction: column;
    align-items: center;
    flex: 1;
    width: 647px;
    margin: 0 auto;
    padding: 0 80px;
    background: #d2e3df;
    font-family: 'Inter', 'Liberation Sans', sans-serif;
}

.auth-head {
    margin-top: 44px;
    text-align: center;
}

.auth-head h1 {
    color: #2d2d39;
    font-size: 33.500px;
    font-weight: 800;
    line-height: 42px;
    letter-spacing: -0.3px;
}

.auth-head p {
    margin-top: 8px;
    color: #6d6d6d;
    font-size: 19px;
    line-height: 22px;
    letter-spacing: 0.1px;
}

.form {
    display: flex;
    flex-direction: column;
    gap: 16px;
    width: 487px;
    margin-top: 34px;
}

.field {
    display: flex;
    flex-direction: column;
    gap: 7px;
}

.field label {
    color: #4a4a68;
    font-size: 14.500px;
    font-weight: 600;
    line-height: 20px;
}

.field input {
    width: 100%;
    height: 51px;
    padding: 0 15px 2px;
    background: #f8fafd;
    border: 2px solid #e5e8eb;
    border-radius: 5px;
    color: #444;
    font-family: inherit;
    font-size: 16px;
}

.field input::placeholder {
    color: #b5b5bb;
}

.field .secret {
    padding-bottom: 4px;
    letter-spacing: 1px;
    font-size: 10px;
    font-weight: 700;
}

/* ---- wallpaper and dock ---- */

.wallpaper {
    position: relative;
    flex: 1;
    background:
        linear-gradient(100deg, transparent 14%, rgba(90, 25, 30, 0.55) 18%, transparent 24%),
        linear-gradient(90deg, #171013 0%, #120c0f 100%);
}

.scribble {
    position: absolute;
    right: 28px;
    bottom: 6px;
}

.dock {
    position: absolute;
    left: 222px;
    top: 841px;
    display: grid;
    grid-template-columns: repeat(6, 45px) 46px 46px 43px 62px 71px 75px 71px 59px 47px 46px 45px 20px 48px 42px;
    grid-template-rows: 51px;
    width: 996px;
    height: 53px;
    padding-left: 2px;
    background: linear-gradient(90deg, #3c3544 0%, #4a3c48 25%, #503b3b 55%, #43343a 85%, #35292f 100%);
    border: 1px solid rgba(255, 255, 255, 0.2);
    border-radius: 15px;
    box-shadow: 0 -4px 14px rgba(0, 0, 0, 0.14);
}

.dock-item {
    position: relative;
    display: flex;
    justify-content: center;
    align-items: flex-end;
    padding-bottom: 9px;
}

.dock-item.raised {
    padding-bottom: 12px;
}

.dock-item.low {
    padding-bottom: 7px;
}

.dotted::after {
    content: '';
    position: absolute;
    left: 50%;
    bottom: 0;
    width: 4px;
    height: 4px;
    margin-left: -2px;
    background: #a9a6a6;
    border-radius: 50%;
}

.dock-badge {
    position: absolute;
    top: -1px;
    right: 1px;
    width: 16px;
    height: 16px;
    background: #f01c1c;
    border-radius: 50%;
    color: #fff;
    font-size: 9.500px;
    font-weight: 500;
    line-height: 16px;
    text-align: center;
}

.dock-sep-cell {
    display: flex;
    justify-content: center;
    align-items: center;
}

.dock-sep {
    width: 1px;
    height: 36px;
    background: rgba(255, 255, 255, 0.22);
}

.dock-tip {
    position: absolute;
    left: 50%;
    top: -69px;
    width: 102px;
    height: 28px;
    margin-left: -53px;
    background: #5f5f5f;
    border: 1px solid #1f1f1f;
    border-radius: 5px;
    color: #fff;
    font-size: 14px;
    line-height: 26px;
    text-align: center;
}

.dock-tip::after {
    content: '';
    position: absolute;
    left: 50%;
    bottom: -8px;
    margin-left: -7px;
    border-top: 8px solid #4a4a4a;
    border-left: 7px solid transparent;
    border-right: 7px solid transparent;
}
```
